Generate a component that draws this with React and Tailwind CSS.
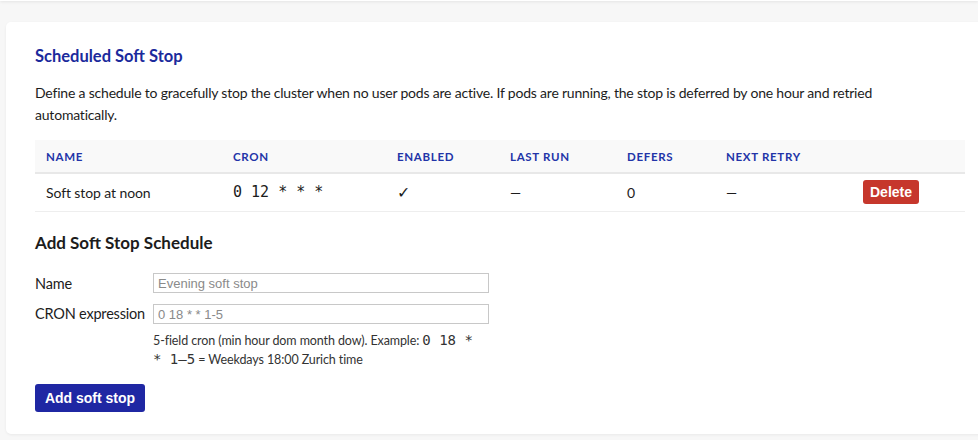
export default function App() {
  return (
    <div className="min-h-[440px] bg-[#f7f7f7] pl-[6px] pt-[22px] font-['Lato','Noto_Sans',sans-serif] text-[#1c1c1c]">
      {/* top bar shadow */}
      <div className="fixed left-0 right-0 top-[-10px] h-[11px] bg-white shadow-[0_1px_3px_rgba(0,0,0,0.08)]" />

      <div className="mr-[-20px] rounded-[5px] bg-white pb-[22px] pl-[29px] pr-[33px] pt-[23px] shadow-[0_1px_3px_rgba(0,0,0,0.06)]">
        <h2 className="text-[16.5px] font-bold leading-[22px] text-[#1b2a9c]">Scheduled Soft Stop</h2>
        <p className="mt-[15px] max-w-[880px] text-[14px] leading-[22px] tracking-[-0.2px]">
          Define a schedule to gracefully stop the cluster when no user pods are active. If pods are running, the stop is deferred by one hour and retried automatically.
        </p>

        {/* Schedules table */}
        <table className="mt-[14px] w-[930px] border-collapse text-[14px] tracking-[-0.1px]">
          <thead>
            <tr className="border-b-2 border-[#e8e8e8] bg-[#f9f9f9] text-left text-[11.5px] font-bold uppercase tracking-[0.06em] text-[#2234a8]">
              <th className="h-[33px] w-[198px] pl-[11px] pt-[2px] font-bold">Name</th>
              <th className="w-[164px] pt-[2px] font-bold">Cron</th>
              <th className="w-[113px] pt-[2px] font-bold">Enabled</th>
              <th className="w-[117px] pt-[2px] font-bold">Last run</th>
              <th className="w-[99px] pt-[2px] font-bold">Defers</th>
              <th className="w-[137px] pt-[2px] font-bold">Next retry</th>
              <th />
            </tr>
          </thead>
          <tbody>
            <tr className="border-b border-[#eeeeee]">
              <td className="h-[38px] pl-[11px]">Soft stop at noon</td>
              <td className="font-['DejaVu_Sans_Mono',monospace] text-[15px] tracking-normal">0 12 * * *</td>
              <td className="text-[16px]">✓</td>
              <td>—</td>
              <td>0</td>
              <td>—</td>
              <td>
                <button className="h-[24px] rounded-[3px] bg-[#c6372c] px-[7px] font-['Liberation_Sans',sans-serif] text-[14px] font-bold tracking-normal text-white">
                  Delete
                </button>
              </td>
            </tr>
          </tbody>
        </table>

        {/* Add form */}
        <h3 className="mt-[20px] text-[17px] font-bold leading-[22px]">Add Soft Stop Schedule</h3>

        <div className="mt-[19px] flex flex-col gap-[9px]">
          <div className="flex items-center">
            <label className="w-[118px] text-[14.5px] tracking-[-0.2px]">Name</label>
            <input
              className="h-[20px] w-[336px] border border-[#c8c8c8] px-[4px] font-['Liberation_Sans',sans-serif] text-[13px] placeholder:text-[#8a8a8a]"
              placeholder="Evening soft stop"
            />
          </div>
          <div className="flex items-center">
            <label className="w-[118px] text-[14.5px] tracking-[-0.2px]">CRON expression</label>
            <input
              className="h-[20px] w-[336px] border border-[#c8c8c8] px-[4px] font-['Liberation_Sans',sans-serif] text-[13px] placeholder:text-[#8a8a8a]"
              placeholder="0 18 * * 1-5"
            />
          </div>
        </div>
        <p className="ml-[118px] mt-[6px] w-[340px] text-[12.5px] leading-[19px] tracking-[-0.1px] text-[#333]">
          5-field cron (min hour dom month dow). Example: <code className="font-['DejaVu_Sans_Mono',monospace] text-[14px] tracking-normal">0 18 *</code>
          <br />
          <code className="font-['DejaVu_Sans_Mono',monospace] text-[14px] tracking-normal">* 1–5</code> = Weekdays 18:00 Zurich time
        </p>

        <button className="mt-[15px] h-[28px] w-[110px] rounded-[3px] bg-[#1f27a3] font-['Liberation_Sans',sans-serif] text-[14px] font-bold text-white">
          Add soft stop
        </button>
      </div>
    </div>
  )
}
